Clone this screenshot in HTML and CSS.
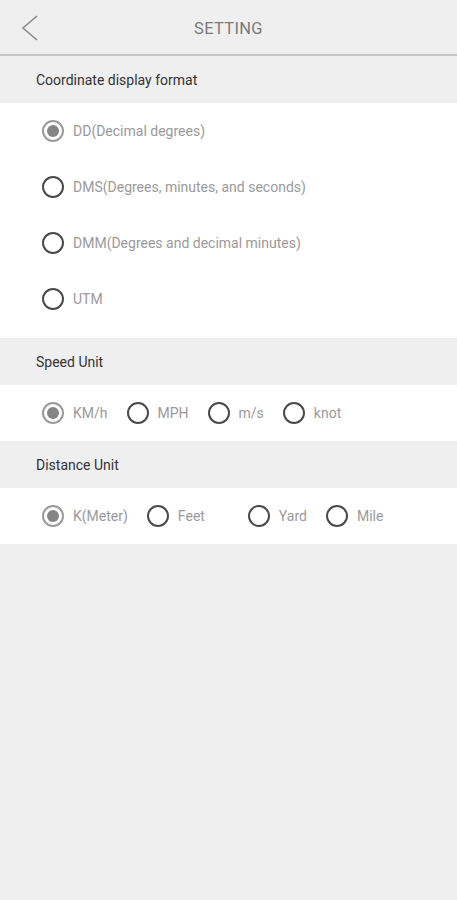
FILE: index.html
```html
<!DOCTYPE html>
<html>
<head>
<meta charset="utf-8">
<link rel="stylesheet" href="styles.css">
</head>
<body>
<div class="app">
  <header class="topbar">
    <svg class="back" width="20" height="28" viewBox="0 0 20 28"><polyline points="17,2 3,14 17,26" fill="none" stroke="#8a8a8a" stroke-width="1.6"/></svg>
    <div class="title">SETTING</div>
  </header>

  <div class="section-head">Coordinate display format</div>
  <div class="list">
    <div class="row"><span class="radio on"></span><span class="label">DD(Decimal degrees)</span></div>
    <div class="row"><span class="radio"></span><span class="label">DMS(Degrees, minutes, and seconds)</span></div>
    <div class="row"><span class="radio"></span><span class="label">DMM(Degrees and decimal minutes)</span></div>
    <div class="row"><span class="radio"></span><span class="label">UTM</span></div>
  </div>

  <div class="section-head">Speed Unit</div>
  <div class="inline-row">
    <div class="opt"><span class="radio on"></span><span class="label">KM/h</span></div>
    <div class="opt"><span class="radio"></span><span class="label">MPH</span></div>
    <div class="opt"><span class="radio"></span><span class="label">m/s</span></div>
    <div class="opt"><span class="radio"></span><span class="label">knot</span></div>
  </div>

  <div class="section-head">Distance Unit</div>
  <div class="inline-row">
    <div class="opt"><span class="radio on"></span><span class="label">K(Meter)</span></div>
    <div class="opt"><span class="radio"></span><span class="label feet">Feet</span></div>
    <div class="opt"><span class="radio"></span><span class="label">Yard</span></div>
    <div class="opt"><span class="radio"></span><span class="label">Mile</span></div>
  </div>
</div>
</body>
</html>
```

FILE: styles.css
```css
html, body {
  margin: 0;
  padding: 0;
  background: #efefef;
  font-family: Roboto, "Liberation Sans", Arial, sans-serif;
}
.app {
  width: 457px;
  min-height: 900px;
  background: #efefef;
}
.topbar {
  height: 54px;
  border-bottom: 2px solid #c4c4c4;
  display: flex;
  align-items: center;
  justify-content: center;
  position: relative;
}
.back {
  position: absolute;
  left: 20px;
  top: 14px;
}
.title {
  font-size: 16.5px;
  color: #7a7a7a;
  letter-spacing: 0.3px;
  padding-top: 2px;
}
.section-head {
  height: 47px;
  padding-left: 36px;
  display: flex;
  align-items: center;
  font-size: 14px;
  color: #333;
}
.list {
  background: #fff;
  padding: 0 0 11px;
}
.row {
  height: 56px;
  display: flex;
  align-items: center;
  padding-left: 42px;
}
.inline-row {
  background: #fff;
  height: 56px;
  display: flex;
  align-items: center;
  padding-left: 42px;
  gap: 19px;
}
.opt {
  display: flex;
  align-items: center;
}
.radio {
  width: 18px;
  height: 18px;
  border: 2px solid #4a4a4a;
  border-radius: 50%;
  box-sizing: content-box;
  flex: none;
  position: relative;
}
.radio.on {
  border-color: #9a9a9a;
}
.radio.on::after {
  content: "";
  position: absolute;
  left: 3px;
  top: 3px;
  width: 12px;
  height: 12px;
  border-radius: 50%;
  background: #858585;
}
.label {
  margin-left: 9px;
  font-size: 14px;
  color: #9a9a9a;
}
.label.feet {
  width: 51px;
}
```
